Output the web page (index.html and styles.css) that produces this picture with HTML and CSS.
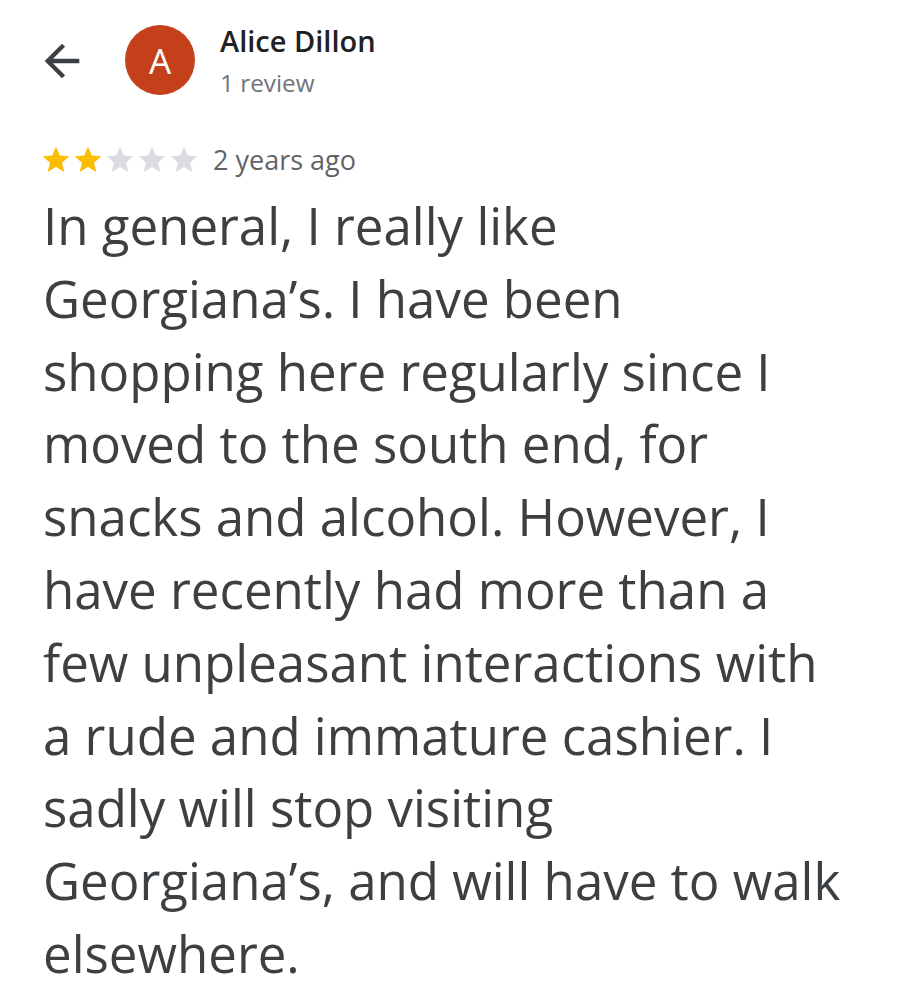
FILE: index.html
```html
<!DOCTYPE html>
<html>
<head>
<meta charset="utf-8">
<link rel="stylesheet" href="styles.css">
</head>
<body>
<div class="page">
  <header class="head">
    <svg class="back" viewBox="0 0 24 24"><path d="M20 11H7.83l5.59-5.59L12 4l-8 8 8 8 1.41-1.41L7.83 13H20v-2z" fill="#3c4043"/></svg>
    <div class="avatar">A</div>
    <div class="who">
      <div class="name">Alice Dillon</div>
      <div class="count">1 review</div>
    </div>
  </header>
  <div class="meta">
    <div class="stars">
      <svg viewBox="0 0 24 24" class="star on"><path d="M12 17.27L18.18 21l-1.64-7.03L22 9.24l-7.19-.61L12 2 9.19 8.63 2 9.24l5.46 4.73L5.82 21z"/></svg>
      <svg viewBox="0 0 24 24" class="star on"><path d="M12 17.27L18.18 21l-1.64-7.03L22 9.24l-7.19-.61L12 2 9.19 8.63 2 9.24l5.46 4.73L5.82 21z"/></svg>
      <svg viewBox="0 0 24 24" class="star"><path d="M12 17.27L18.18 21l-1.64-7.03L22 9.24l-7.19-.61L12 2 9.19 8.63 2 9.24l5.46 4.73L5.82 21z"/></svg>
      <svg viewBox="0 0 24 24" class="star"><path d="M12 17.27L18.18 21l-1.64-7.03L22 9.24l-7.19-.61L12 2 9.19 8.63 2 9.24l5.46 4.73L5.82 21z"/></svg>
      <svg viewBox="0 0 24 24" class="star"><path d="M12 17.27L18.18 21l-1.64-7.03L22 9.24l-7.19-.61L12 2 9.19 8.63 2 9.24l5.46 4.73L5.82 21z"/></svg>
    </div>
    <span class="when">2 years ago</span>
  </div>
  <p class="review">In general, I really like<br>Georgiana’s. I have been<br>shopping here regularly since I<br>moved to the south end, for<br>snacks and alcohol. However, I<br>have recently had more than a<br>few unpleasant interactions with<br>a rude and immature cashier. I<br>sadly will stop visiting<br>Georgiana’s, and will have to walk<br>elsewhere.</p>
</div>
</body>
</html>
```

FILE: styles.css
```css
html, body {
  margin: 0;
  padding: 0;
  background: #ffffff;
}
body {
  font-family: "Open Sans", Roboto, sans-serif;
  color: #3c4043;
}
.page {
  width: 905px;
  height: 1000px;
  overflow: hidden;
  padding: 25px 0 0 36px;
  box-sizing: border-box;
}
.head {
  display: flex;
  align-items: flex-start;
  height: 70px;
}
.back {
  margin-top: 10px;
  width: 52px;
  height: 52px;
  flex: none;
}
.avatar {
  margin-left: 37px;
  width: 70px;
  height: 70px;
  border-radius: 50%;
  background: #c4401a;
  color: #fff;
  font-size: 35px;
  line-height: 1;
  display: flex;
  align-items: center;
  justify-content: center;
  flex: none;
}
.who {
  margin-left: 25px;
  margin-top: -2px;
}
.name {
  font-size: 29px;
  font-weight: 600;
  color: #202124;
  line-height: 36px;
}
.count {
  font-size: 24.3px;
  color: #70757a;
  line-height: 30px;
  margin-top: 9px;
}
.meta {
  display: flex;
  align-items: center;
  margin-top: 49px;
  padding-left: 4px;
  height: 32px;
}
.stars {
  display: flex;
}
.star {
  width: 32px;
  height: 32px;
  fill: #dadce0;
}
.star.on {
  fill: #fbbc04;
}
.when {
  margin-left: 13px;
  font-size: 27px;
  line-height: 32px;
  color: #5f6368;
}
.review {
  margin: 13px 0 0 7px;
  white-space: nowrap;
  font-size: 51px;
  line-height: 72.8px;
  color: #3c4043;
}
```
